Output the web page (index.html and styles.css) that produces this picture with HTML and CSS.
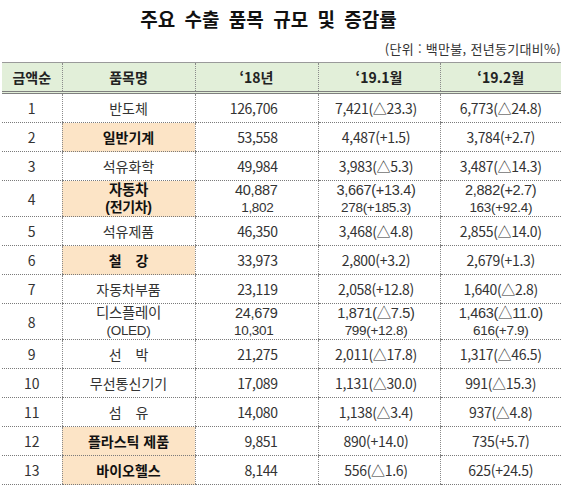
FILE: index.html
```html
<!DOCTYPE html>
<html lang="ko">
<head>
<meta charset="utf-8">
<link rel="stylesheet" href="styles.css">
</head>
<body>
<div class="page">
  <h1 class="title">주요 수출 품목 규모 및 증감률</h1>
  <div class="unit">(단위 : 백만불, 전년동기대비%)</div>
  <table class="grid">
    <colgroup>
      <col class="c-rank"><col class="c-name"><col class="c-y18"><col class="c-m1"><col class="c-m2">
    </colgroup>
    <thead>
      <tr><th>금액순</th><th>품목명</th><th>‘18년</th><th>‘19.1월</th><th>‘19.2월</th></tr>
    </thead>
    <tbody>
      <tr><td class="rank">1</td><td class="name">반도체</td><td class="num">126,706</td><td class="chg">7,421(△23.3)</td><td class="chg">6,773(△24.8)</td></tr>
      <tr><td class="rank">2</td><td class="name hl">일반기계</td><td class="num">53,558</td><td class="chg">4,487(+1.5)</td><td class="chg">3,784(+2.7)</td></tr>
      <tr><td class="rank">3</td><td class="name">석유화학</td><td class="num">49,984</td><td class="chg">3,983(△5.3)</td><td class="chg">3,487(△14.3)</td></tr>
      <tr class="tall"><td class="rank">4</td><td class="name hl"><span class="l1">자동차</span><span class="l2 b">(전기차)</span></td><td class="num"><span class="l1">40,887</span><span class="l2">1,802</span></td><td class="chg"><span class="l1">3,667(+13.4)</span><span class="l2">278(+185.3)</span></td><td class="chg"><span class="l1">2,882(+2.7)</span><span class="l2">163(+92.4)</span></td></tr>
      <tr><td class="rank">5</td><td class="name">석유제품</td><td class="num">46,350</td><td class="chg">3,468(△4.8)</td><td class="chg">2,855(△14.0)</td></tr>
      <tr><td class="rank">6</td><td class="name hl wide">철 강</td><td class="num">33,973</td><td class="chg">2,800(+3.2)</td><td class="chg">2,679(+1.3)</td></tr>
      <tr><td class="rank">7</td><td class="name">자동차부품</td><td class="num">23,119</td><td class="chg">2,058(+12.8)</td><td class="chg">1,640(△2.8)</td></tr>
      <tr class="tall"><td class="rank">8</td><td class="name"><span class="l1">디스플레이</span><span class="l2">(OLED)</span></td><td class="num"><span class="l1">24,679</span><span class="l2">10,301</span></td><td class="chg"><span class="l1">1,871(△7.5)</span><span class="l2">799(+12.8)</span></td><td class="chg"><span class="l1">1,463(△11.0)</span><span class="l2">616(+7.9)</span></td></tr>
      <tr><td class="rank">9</td><td class="name wide">선 박</td><td class="num">21,275</td><td class="chg">2,011(△17.8)</td><td class="chg">1,317(△46.5)</td></tr>
      <tr><td class="rank">10</td><td class="name">무선통신기기</td><td class="num">17,089</td><td class="chg">1,131(△30.0)</td><td class="chg">991(△15.3)</td></tr>
      <tr><td class="rank">11</td><td class="name wide">섬 유</td><td class="num">14,080</td><td class="chg">1,138(△3.4)</td><td class="chg">937(△4.8)</td></tr>
      <tr><td class="rank">12</td><td class="name hl">플라스틱 제품</td><td class="num">9,851</td><td class="chg">890(+14.0)</td><td class="chg">735(+5.7)</td></tr>
      <tr><td class="rank">13</td><td class="name hl">바이오헬스</td><td class="num">8,144</td><td class="chg">556(△1.6)</td><td class="chg">625(+24.5)</td></tr>
    </tbody>
  </table>
</div>
</body>
</html>
```
FILE: styles.css
```css
html, body {
  margin: 0;
  padding: 0;
  background: #ffffff;
}
body {
  font-family: "Noto Sans CJK KR", "Noto Sans", sans-serif;
  color: #333333;
  width: 570px;
  height: 485px;
  overflow: hidden;
}
.page {
  padding: 0 9px 0 2px;
}
.title {
  margin: 0;
  padding: 6px 26px 0 0;
  height: 30px;
  font-size: 19px;
  line-height: 26px;
  font-weight: 700;
  color: #111111;
  text-align: center;
  word-spacing: 4px;
}
.unit {
  text-align: right;
  font-size: 13px;
  line-height: 26px;
  height: 26px;
  color: #333333;
  letter-spacing: 0.3px;
}
.grid {
  width: 559px;
  border-collapse: collapse;
  table-layout: fixed;
  font-size: 14px;
}
.c-rank { width: 60px; }
.c-name { width: 133px; }
.c-y18 { width: 123px; }
.c-m1 { width: 122px; }
.c-m2 { width: 121px; }

.grid th {
  background: #e2efd9;
  height: 28px;
  padding: 0;
  font-weight: 700;
  color: #222222;
  border-top: 1px solid #9a9a9a;
  border-bottom: 3px double #7f7f7f;
  border-left: 1px dotted #8a8a8a;
  line-height: 20px;
}
.grid th:first-child { border-left: none; }

.grid td {
  height: 28px;
  padding: 0;
  border-bottom: 1px dotted #7a7a7a;
  border-left: 1px dotted #8a8a8a;
  text-align: center;
  line-height: 18px;
  vertical-align: middle;
}
.grid td:first-child { border-left: none; }
.grid tr.tall td { height: 35px; }

.num {
  text-align: right !important;
  padding-right: 40px !important;
  letter-spacing: -0.4px;
}
.chg { letter-spacing: -0.3px; padding-right: 6px !important; }
.chg:last-child { padding-right: 0 !important; }
.rank { color: #333333; }
.hl {
  background: #fce4c6;
  font-weight: 700;
  color: #111111;
}
.wide { word-spacing: 10px; }
.l1, .l2 {
  display: block;
  font-family: "Liberation Sans", "Noto Sans CJK KR", sans-serif;
  letter-spacing: -0.3px;
}
.l1 { line-height: 17px; font-size: 14.5px; }
.l2 { line-height: 17px; font-size: 13.5px; }
.num .l2 { padding-right: 4px; }
.l2.b { font-size: 14px; font-weight: 700; }
```
